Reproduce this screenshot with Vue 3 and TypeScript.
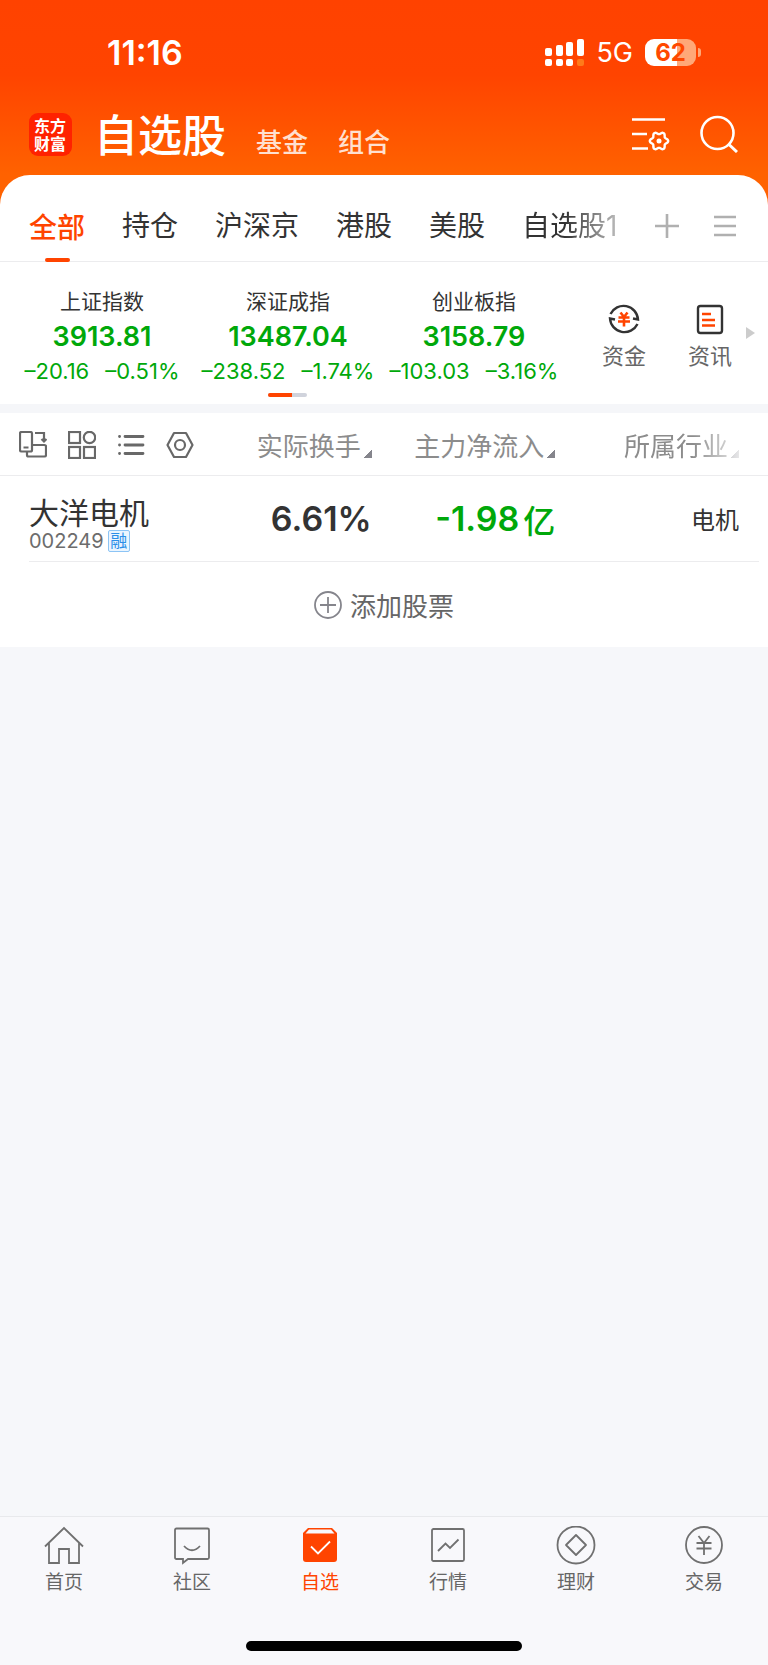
<script setup lang="ts">
interface IndexQuote {
  name: string
  value: string
  change: string
  percent: string
}

const groups: string[] = ['全部', '持仓', '沪深京', '港股', '美股', '自选股1']

const indices: IndexQuote[] = [
  { name: '上证指数', value: '3913.81', change: '–20.16', percent: '–0.51%' },
  { name: '深证成指', value: '13487.04', change: '–238.52', percent: '–1.74%' },
  { name: '创业板指', value: '3158.79', change: '–103.03', percent: '–3.16%' },
]

const columns: string[] = ['实际换手', '主力净流入', '所属行业']

// Outline of a gear with six rounded lobes
function gearPath(cx: number, cy: number): string {
  const points: string[] = []
  for (let step = 0; step < 72; step++) {
    const angle = (step * Math.PI) / 36
    const radius = 8 + 1.2 * Math.cos(6 * angle)
    points.push(`${(cx + radius * Math.cos(angle)).toFixed(2)} ${(cy + radius * Math.sin(angle)).toFixed(2)}`)
  }
  return `M${points.join('L')}Z`
}

const gear = gearPath(27, 26)
</script>

<template>
  <div class="app">
    <header class="top">
      <div class="status">
        <time class="clock">11:16</time>
        <div class="signals">
          <svg class="cell" width="39" height="27" viewBox="0 0 39 27" fill="#fff">
            <rect x="0" y="9" width="7" height="8" rx="2" />
            <rect x="11" y="6" width="7" height="11" rx="2" />
            <rect x="21" y="3" width="7" height="14" rx="2" />
            <rect x="32" y="0" width="7" height="17" rx="2" />
            <rect x="0" y="20" width="7" height="7" rx="2" />
            <rect x="11" y="20" width="7" height="7" rx="2" />
            <rect x="21" y="20" width="7" height="7" rx="2" />
            <rect x="32" y="20" width="7" height="7" rx="2" fill="#ff7a1a" />
          </svg>
          <span class="network">5G</span>
          <div class="battery"><span class="level">62</span></div>
        </div>
      </div>
      <div class="titlebar">
        <div class="logo">东方财富</div>
        <nav class="sections">
          <h1>自选股</h1>
          <a href="#fund">基金</a>
          <a href="#portfolio">组合</a>
        </nav>
        <div class="actions">
          <button type="button" aria-label="设置">
            <svg width="38" height="38" viewBox="0 0 38 38" fill="none" stroke="#fff" stroke-width="2.6">
              <path d="M0 4.500H33M0 19H15M0 33.500H16" />
              <path :d="gear" stroke-width="2.400" stroke-linejoin="round" />
              <circle cx="27" cy="26" r="2.500" fill="#fff" stroke="none" />
            </svg>
          </button>
          <button type="button" aria-label="搜索">
            <svg width="38" height="38" viewBox="0 0 38 38" fill="none" stroke="#fff" stroke-width="2.600">
              <circle cx="17.500" cy="18" r="16" />
              <path d="M28.500 29L37 37" stroke-width="3" />
            </svg>
          </button>
        </div>
      </div>
    </header>

    <main class="sheet">
      <div class="groups">
        <nav class="group-list">
          <a v-for="(group, i) in groups" :key="group" href="#group" :class="{ active: i === 0 }">{{ group }}</a>
        </nav>
        <button type="button" aria-label="添加分组">
          <svg width="24" height="24" viewBox="0 0 24 24" stroke="#b0b0b0" stroke-width="2.600"><path d="M12 0V24M0 12H24" /></svg>
        </button>
        <button type="button" aria-label="管理分组">
          <svg width="22" height="24" viewBox="0 0 22 24" stroke="#b0b0b0" stroke-width="2.600"><path d="M0 3H22M0 12H22M0 21H22" /></svg>
        </button>
      </div>

      <section class="market">
        <div class="quotes">
          <article v-for="item in indices" :key="item.name" class="quote">
            <h2>{{ item.name }}</h2>
            <strong>{{ item.value }}</strong>
            <p><span>{{ item.change }}</span><span>{{ item.percent }}</span></p>
          </article>
          <div class="pager"><i></i></div>
        </div>
        <div class="shortcuts">
          <button type="button">
            <svg width="32" height="32" viewBox="0 0 32 32" fill="none" stroke="#333" stroke-width="2.400">
              <path d="M2.500 11A14.500 14.500 0 0 1 30 16.500L25 15.500" />
              <path d="M29.500 21A14.500 14.500 0 0 1 2 15.500L7 16.500" />
              <path d="M12.500 9.500L16 14L19.500 9.500M10.500 14.500H21.500M10 18.500H22M16 14V23.500" stroke="#ff4400" stroke-width="2.600" />
            </svg>
            资金
          </button>
          <button type="button">
            <svg width="32" height="32" viewBox="0 0 32 32" fill="none" stroke="#333" stroke-width="2.400">
              <rect x="4" y="3" width="24" height="27" rx="2.500" />
              <path d="M8 11H17M8 17H21M8 22.500H21" stroke="#ff4400" />
            </svg>
            资讯
          </button>
        </div>
        <svg class="more" width="9" height="12" viewBox="0 0 9 12"><path d="M0 0L9 6L0 12Z" fill="#ccc" /></svg>
      </section>

      <section class="watchlist">
        <table>
          <thead>
            <tr>
              <th class="tools">
                <div>
                  <button type="button" aria-label="横屏">
                    <svg viewBox="0 0 28 28"><rect x="1" y="1" width="12" height="19.500" rx="1.500" /><path d="M4.500 16.500H9.500M16 2H25V10M22.500 8L25 10.500L27.500 8M13 14H25.500Q27 14 27 15.500V24Q27 25.500 25.500 25.500H9.500Q8 25.500 8 24V20.500" /></svg>
                  </button>
                  <button type="button" aria-label="宫格">
                    <svg viewBox="0 0 28 28"><rect x="1" y="1" width="11" height="11" /><circle cx="21.500" cy="6.500" r="5.700" /><rect x="1" y="16" width="11" height="11" /><rect x="16" y="16" width="11" height="11" /></svg>
                  </button>
                  <button type="button" aria-label="列表">
                    <svg viewBox="0 0 28 28" class="bold"><path d="M8 5.500H26M8 14H26M8 22.500H26M2.500 5.500H2.600M2.500 14H2.600M2.500 22.500H2.600" stroke-linecap="round" /></svg>
                  </button>
                  <button type="button" aria-label="设置表头">
                    <svg viewBox="0 0 28 28"><path d="M8 2H20L26.500 14L20 26H8L1.500 14Z" stroke-linejoin="round" /><circle cx="14" cy="14" r="5" /></svg>
                  </button>
                </div>
              </th>
              <th v-for="column in columns" :key="column" scope="col"><button type="button" class="sort">{{ column }}</button></th>
            </tr>
          </thead>
          <tbody>
            <tr>
              <td class="stock">
                <a href="#002249">大洋电机</a>
                <p>002249<span>融</span></p>
              </td>
              <td class="figure">6.61%</td>
              <td class="figure down"><div>-1.98<span>亿</span></div></td>
              <td class="industry">电机</td>
            </tr>
          </tbody>
        </table>
        <hr />
        <button type="button" class="add">
          <svg width="28" height="28" viewBox="0 0 28 28" fill="none" stroke="#85858c" stroke-width="1.800"><circle cx="14" cy="14" r="13" /><path d="M14 6V22M6 14H22" /></svg>
          添加股票
        </button>
      </section>
    </main>

    <footer class="bottom">
      <nav class="tabs">
        <a href="#home">
          <svg viewBox="0 0 40 40"><path d="M1 20.500L20 2L39 20.500M5 17V37H15V23H25V37H35V17" /></svg>
          首页
        </a>
        <a href="#community">
          <svg viewBox="0 0 40 40"><path d="M4.500 2.500H35.500Q37 2.500 37 4V31.500Q37 33 35.500 33H16L11 37V33H4.500Q3 33 3 31.500V4Q3 2.500 4.500 2.500ZM12 20Q20 28.500 28 20" /></svg>
          社区
        </a>
        <a href="#watch" class="active">
          <svg viewBox="0 0 40 40"><path d="M8 2H32L37 7V33Q37 36 34 36H6Q3 36 3 33V7Z" fill="#ff4400" stroke="none" /><path d="M9 3.600H31L34.500 7.500H5.500Z" fill="#f8f8fb" stroke="none" /><path d="M11 20.500L18 27.500L30 15.500" stroke="#fff" /></svg>
          自选
        </a>
        <a href="#market">
          <svg viewBox="0 0 40 40"><rect x="4" y="3" width="32" height="32" rx="1.500" /><path d="M10 25L17.500 17.500L22 22L30.500 13.500" /></svg>
          行情
        </a>
        <a href="#wealth">
          <svg viewBox="0 0 40 40"><circle cx="20" cy="19" r="18.500" /><path d="M20 9L30 19L20 29L10 19Z" stroke-linejoin="round" /></svg>
          理财
        </a>
        <a href="#trade">
          <svg viewBox="0 0 40 40"><circle cx="20" cy="19" r="18" /><path d="M14.500 10L20 17L25.500 10M12.500 17H27.500M12.500 22.500H27.500M20 17V29" /></svg>
          交易
        </a>
      </nav>
      <div class="home-indicator"></div>
    </footer>
  </div>
</template>

<style>
body {
  margin: 0;
}
</style>

<style scoped>
.app {
  display: flex;
  flex-direction: column;
  min-height: 100vh;
  background: #f6f7fa;
  color: #333;
  font-family: Inter, "Noto Sans CJK SC", sans-serif;
}

button {
  display: flex;
  align-items: center;
  justify-content: center;
  padding: 0;
  border: 0;
  background: none;
  color: inherit;
  font: inherit;
}

a {
  color: inherit;
  text-decoration: none;
}

h1,
h2,
p {
  margin: 0;
  font-weight: 400;
}

svg {
  display: block;
  flex: none;
}

.top {
  padding-bottom: 43px;
  background: linear-gradient(#ff4200 0, #ff4400 75px, #ff6200 175px);
  color: #fff;
}

.status {
  box-sizing: border-box;
  display: flex;
  align-items: center;
  justify-content: space-between;
  height: 104px;
  padding: 1px 66px 0 107px;
}

.clock {
  font-size: 34px;
  font-weight: 600;
}

.signals {
  display: flex;
  align-items: center;
}

.network {
  margin: 0 12px;
  font-size: 27px;
  line-height: 28px;
}

.battery {
  position: relative;
  width: 51px;
  height: 27px;
  margin-right: 6px;
  border-radius: 9px;
  background: linear-gradient(90deg, #fff 62%, #ffa878 62%);
  color: #ff4800;
  font-size: 24px;
  font-weight: 700;
  line-height: 27px;
  text-align: center;
}

.battery::after {
  content: "";
  position: absolute;
  top: 9px;
  right: -5px;
  width: 3px;
  height: 9px;
  border-radius: 0 4px 4px 0;
  background: #ffa878;
}

.titlebar {
  display: flex;
  align-items: center;
  height: 60px;
  padding: 0 30px 0 29px;
}

.logo {
  box-sizing: border-box;
  width: 43px;
  height: 43px;
  padding: 3px 5px;
  border-radius: 9px;
  background: #ff2200;
  font-family: "Noto Sans CJK SC", sans-serif;
  font-size: 16px;
  font-weight: 700;
  line-height: 18px;
  word-break: break-all;
}

.sections {
  display: flex;
  flex: 1;
  align-items: baseline;
  gap: 30px;
  margin-left: 22px;
  padding-top: 6px;
  font-family: "Noto Sans CJK SC", sans-serif;
  font-size: 26px;
  line-height: 60px;
}

.sections h1 {
  font-size: 44px;
  font-weight: 500;
}

.sections a {
  color: #ffe0d0;
  font-weight: 500;
}

.actions {
  display: flex;
  gap: 30px;
}

.sheet {
  margin-top: -32px;
  border-radius: 30px 30px 0 0;
  background: #fff;
}

.groups {
  box-sizing: border-box;
  display: flex;
  align-items: center;
  gap: 35px;
  height: 87px;
  padding: 16px 32px 0 29px;
  border-bottom: 1px solid #ececee;
}

.group-list {
  display: flex;
  flex: 1;
  align-self: stretch;
  gap: 37px;
  margin-bottom: -1px;
  overflow: hidden;
  font-size: 28px;
  line-height: 70px;
  white-space: nowrap;
}

.group-list a:last-child {
  background: linear-gradient(90deg, #333 45%, #bbb 100%);
  background-clip: text;
  color: transparent;
}

.group-list .active {
  position: relative;
  color: #ff4400;
  font-family: "Noto Sans CJK SC", sans-serif;
  font-weight: 500;
}

.group-list .active::after {
  content: "";
  position: absolute;
  bottom: 0;
  left: calc(50% - 12px);
  width: 25px;
  height: 4px;
  border-radius: 2px;
  background: #ff4400;
}

.market {
  display: flex;
  align-items: center;
  padding: 0 13px 0 9px;
  border-bottom: 9px solid #f5f6f9;
}

.quotes {
  display: grid;
  flex: 1;
  grid-template-columns: repeat(3, 1fr);
  padding: 22px 0 7px;
}

.quote {
  display: flex;
  flex-direction: column;
  align-items: center;
  color: #00a80a;
}

.quote h2 {
  color: #333;
  font-size: 21px;
  line-height: 36px;
}

.quote strong {
  font-size: 27px;
  font-weight: 600;
  line-height: 34px;
}

.quote p {
  display: flex;
  gap: 16px;
  font-size: 22px;
  line-height: 34px;
  white-space: nowrap;
}

.pager {
  grid-column: 2;
  justify-self: center;
  width: 39px;
  height: 4px;
  margin-top: 5px;
  border-radius: 2px;
  overflow: hidden;
  background: #d0d3dc;
}

.pager i {
  display: block;
  width: 60%;
  height: 100%;
  background: #ff4400;
}

.shortcuts {
  display: flex;
  gap: 42px;
  margin: 0 14px 0 35px;
  padding-top: 8px;
  color: #666;
  font-size: 22px;
  line-height: 32px;
}

.shortcuts button {
  flex-direction: column;
  gap: 5px;
}

.watchlist {
  background: #fff;
}

table {
  width: 100%;
  border-collapse: collapse;
  table-layout: fixed;
}

th,
td {
  padding: 0;
  text-align: right;
  white-space: nowrap;
}

th {
  width: 24%;
  height: 62px;
  border-bottom: 1px solid #ececee;
  color: #8c8c8c;
  font-size: 26px;
  font-weight: 400;
}

th:last-child,
td:last-child {
  padding-right: 29px;
}

.tools {
  width: 188px;
}

.tools div {
  display: flex;
  gap: 21px;
  padding: 2px 0 0 19px;
}

.tools svg {
  width: 28px;
  height: 28px;
  fill: none;
  stroke: #686868;
  stroke-width: 2.2;
}

.tools .bold {
  stroke-width: 2.8;
}

.sort {
  margin-left: auto;
}

.sort::after {
  content: "";
  align-self: flex-end;
  width: 8px;
  height: 8px;
  margin: 0 0 5px 3px;
  background: linear-gradient(135deg, transparent 50%, #85858c 50%);
}

th:last-child .sort {
  mask-image: linear-gradient(90deg, #000 60%, transparent 110%);
}

td {
  height: 85px;
}

.stock {
  box-sizing: border-box;
  padding: 10px 0 0 29px;
  text-align: left;
}

.stock a {
  display: block;
  font-size: 30px;
  line-height: 34px;
}

.stock p {
  display: flex;
  align-items: center;
  gap: 4px;
  color: #6c6c6c;
  font-size: 20px;
  line-height: 22px;
}

.stock span {
  width: 20px;
  border: 1px solid #8cc4f5;
  border-radius: 2px;
  background: #eaf5ff;
  color: #2a8ee8;
  font-size: 17px;
  line-height: 20px;
  text-align: center;
}

.figure {
  font-size: 34px;
  font-weight: 600;
}

.down {
  color: #00a80a;
}

.figure div {
  display: flex;
  align-items: center;
  justify-content: flex-end;
  gap: 4px;
}

.figure span {
  font-family: "Noto Sans CJK SC", sans-serif;
  font-size: 32px;
  font-weight: 500;
  line-height: 40px;
}

.industry {
  font-size: 24px;
}

hr {
  height: 1px;
  margin: 0 9px 0 29px;
  border: 0;
  background: #ececee;
}

.add {
  gap: 8px;
  width: 100%;
  height: 85px;
  color: #666;
  font-size: 26px;
}

.bottom {
  margin-top: auto;
  padding-bottom: 14px;
  border-top: 1px solid #e8e9ec;
  background: #f8f8fb;
}

.tabs {
  display: grid;
  grid-template-columns: repeat(6, 1fr);
  padding-top: 9px;
  color: #666;
  font-size: 19px;
  line-height: 28px;
}

.tabs a {
  display: flex;
  flex-direction: column;
  align-items: center;
  gap: 3px;
}

.tabs .active {
  color: #ff4400;
}

.tabs svg {
  width: 40px;
  height: 40px;
  fill: none;
  stroke: #707070;
  stroke-width: 1.8;
}

.home-indicator {
  width: 36%;
  height: 10px;
  margin: 44px auto 0;
  border-radius: 5px;
  background: #000;
}
</style>
